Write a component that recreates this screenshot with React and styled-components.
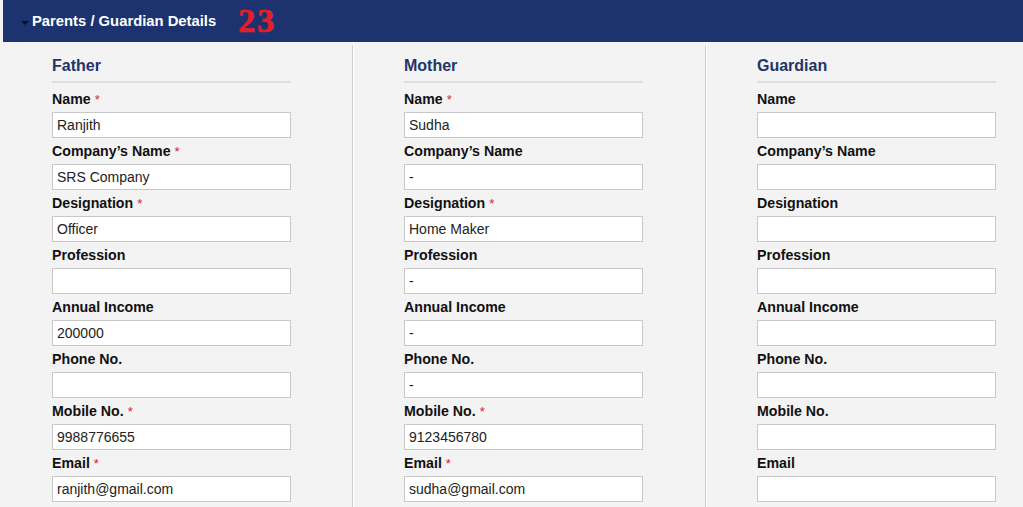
import React from "react";
import styled, { createGlobalStyle } from "styled-components";

const GlobalStyle = createGlobalStyle`
body{
  margin: 0;
  background-color: #f3f3f3;
  font-family: "Liberation Sans", Arial, sans-serif;
}
`;

const Page = styled.div`
width: 1023px;
height: 507px;
overflow: hidden;
`;

const Header = styled.div`
margin-left: 3px;
height: 42px;
background-color: #1d3370;
display: flex;
align-items: center;
padding-left: 18px;
box-sizing: border-box;
`;

const Caret = styled.span`
width: 0;
height: 0;
border-left: 4px solid transparent;
border-right: 4px solid transparent;
border-top: 4px solid #111;
margin-top: 3px;
margin-right: 3px;
`;

const Title = styled.span`
color: #fff;
font-weight: bold;
font-size: 14.8px;
`;

const Count = styled.span`
color: #e41e2b;
font-family: "Liberation Serif", "Times New Roman", serif;
font-weight: bold;
font-size: 34px;
letter-spacing: 2px;
-webkit-text-stroke: 0.7px #e41e2b;
margin-left: 22px;
line-height: 1;
`;

const Columns = styled.div`
display: grid;
grid-template-columns: 352px 353px 1fr;
margin-top: 3px;
`;

const Column = styled.section`
padding-top: 11px;
padding-left: ${(p) => (p.$first ? "52px" : "51px")};
border-left: ${(p) => (p.$first ? "none" : "1px solid #cfcfcf")};
box-shadow: ${(p) => (p.$first ? "none" : "inset 1px 0 0 #fff")};
min-height: 470px;
`;

const Block = styled.div`
width: 239px;
`;

const Heading = styled.h2`
margin: 0 0 8px;
font-size: 16px;
line-height: 20px;
color: #1f3567;
padding-bottom: 5px;
border-bottom: 2px solid #dedede;
`;

const Label = styled.label`
display: block;
font-size: 14.2px;
font-weight: bold;
line-height: 17px;
color: #111;
margin-bottom: 4px;
`;

const Star = styled.span`
color: #d4242c;
font-weight: normal;
font-size: 13px;
margin-left: 4px;
`;

const Input = styled.input`
display: block;
width: 100%;
height: 26px;
box-sizing: border-box;
border: 1px solid #c8c8c8;
background: #fff;
padding: 0 4px;
font-family: "Liberation Sans", Arial, sans-serif;
font-size: 14px;
color: #222;
margin-bottom: 5px;
outline: none;
`;

const fields = [
  "Name",
  "Company’s Name",
  "Designation",
  "Profession",
  "Annual Income",
  "Phone No.",
  "Mobile No.",
  "Email",
];

const people = [
  {
    title: "Father",
    required: ["Name", "Company’s Name", "Designation", "Mobile No.", "Email"],
    values: ["Ranjith", "SRS Company", "Officer", "", "200000", "", "9988776655", "ranjith@gmail.com"],
  },
  {
    title: "Mother",
    required: ["Name", "Designation", "Mobile No.", "Email"],
    values: ["Sudha", "-", "Home Maker", "-", "-", "-", "9123456780", "sudha@gmail.com"],
  },
  {
    title: "Guardian",
    required: [],
    values: ["", "", "", "", "", "", "", ""],
  },
];

const App = () => {
  return (
    <Page>
      <GlobalStyle />
      <Header>
        <Caret />
        <Title>Parents / Guardian Details</Title>
        <Count>23</Count>
      </Header>
      <Columns>
        {people.map((person, i) => (
          <Column key={person.title} $first={i === 0}>
            <Block>
              <Heading>{person.title}</Heading>
              {fields.map((f, j) => (
                <div key={f}>
                  <Label>
                    {f}
                    {person.required.includes(f) && <Star>*</Star>}
                  </Label>
                  <Input defaultValue={person.values[j]} readOnly />
                </div>
              ))}
            </Block>
          </Column>
        ))}
      </Columns>
    </Page>
  );
};

export default App;
